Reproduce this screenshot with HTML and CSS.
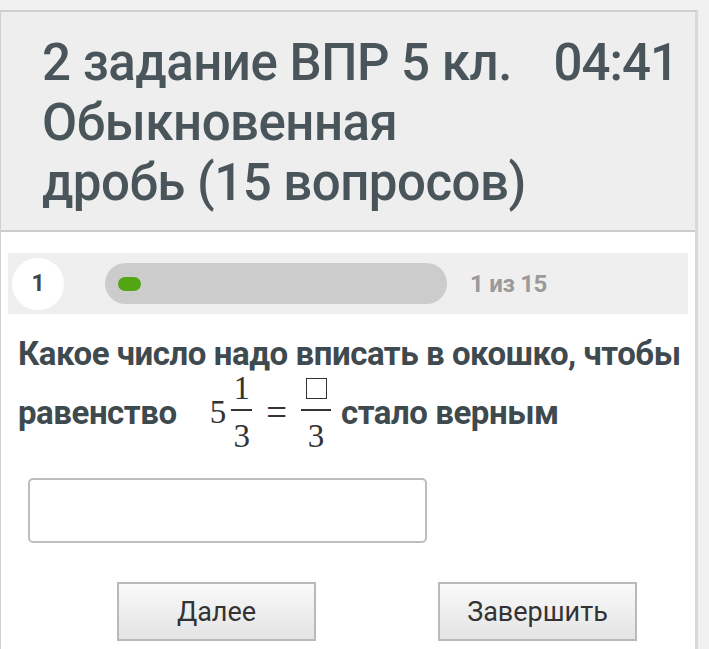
FILE: index.html
```html
<!DOCTYPE html>
<html lang="ru">
<head>
<meta charset="utf-8">
<title>ВПР 5 кл.</title>
<link rel="stylesheet" href="styles.css">
</head>
<body>
<div class="card">
  <div class="header">
    <div class="title">2 задание ВПР 5 кл. Обыкновенная дробь (15 вопросов)</div>
    <div class="timer">04:41</div>
  </div>
  <div class="progress">
    <div class="num">1</div>
    <div class="track"><div class="dot"></div></div>
    <div class="count">1 из 15</div>
  </div>
  <div class="question">
    <div class="line1">Какое число надо вписать в окошко, чтобы</div>
    <div class="line2">
      <span>равенство</span>
      <span class="math">
        <span class="whole">5</span>
        <span class="frac"><span class="nu">1</span><span class="de">3</span></span>
        <span class="eq">=</span>
        <span class="frac frac2"><span class="nu"><span class="box"></span></span><span class="de">3</span></span>
      </span>
      <span>стало верным</span>
    </div>
  </div>
  <div class="answer"><input class="field" type="text"></div>
  <div class="buttons">
    <button class="btn">Далее</button>
    <button class="btn">Завершить</button>
  </div>
</div>
</body>
</html>
```

FILE: styles.css
```css
html, body {
  margin: 0;
  padding: 0;
}
body {
  background: #f1f1f1;
  font-family: Roboto, "Noto Sans", sans-serif;
  height: 649px;
  overflow: hidden;
}
.card {
  margin-top: 10px;
  width: 694px;
  height: 637px;
  background: #fff;
  border-top: 2px solid #cfcfcf;
  border-left: 1px solid #d0d0d0;
  border-right: 3px solid #d9d9d9;
  overflow: hidden;
}
.header {
  background: #eeeeee;
  border-bottom: 2px solid #cccccc;
  display: flex;
  justify-content: space-between;
  align-items: flex-start;
  padding: 21px 17px 17px 41px;
  color: #4a555b;
  font-size: 51px;
  line-height: 60px;
  font-weight: 500;
  letter-spacing: -0.5px;
}
.title {
  width: 500px;
}
.timer {
  letter-spacing: -1px;
}
.progress {
  margin: 21px 7px 0 7px;
  height: 61px;
  background: #efefef;
  display: flex;
  align-items: center;
  padding-left: 4px;
}
.num {
  width: 52px;
  height: 52px;
  border-radius: 50%;
  background: #fff;
  display: flex;
  align-items: center;
  justify-content: center;
  font-weight: 700;
  font-size: 23px;
  color: #444;
}
.track {
  margin-left: 41px;
  width: 342px;
  height: 41px;
  border-radius: 21px;
  background: #cccccc;
  display: flex;
  align-items: center;
}
.dot {
  margin-left: 13px;
  width: 23px;
  height: 14px;
  border-radius: 7px;
  background: #52a614;
}
.count {
  margin-left: 23px;
  font-weight: 700;
  font-size: 24px;
  letter-spacing: -0.3px;
  color: #9a9a9a;
}
.question {
  padding: 20px 0 0 17px;
  color: #3f4a4f;
  font-weight: 700;
  font-size: 33px;
  letter-spacing: -0.45px;
}
.line1 {
  line-height: 40px;
}
.line2 {
  display: flex;
  align-items: center;
  margin-top: -4px;
}
.math {
  display: inline-flex;
  align-items: center;
  margin-left: 33px;
  margin-right: 10px;
  font-family: "Liberation Serif", "Times New Roman", serif;
  font-weight: 400;
  font-size: 33px;
  letter-spacing: 0;
  color: #333;
}
.whole {
  margin-right: 5px;
}
.frac {
  display: inline-flex;
  flex-direction: column;
  align-items: center;
  width: 21px;
}
.frac .nu {
  line-height: 36px;
  padding-bottom: 3px;
  border-bottom: 2px solid #333;
  width: 100%;
  text-align: center;
}
.frac .de {
  line-height: 36px;
  padding-top: 7px;
}
.frac2 {
  width: 30px;
}
.frac2 .nu {
  height: 36px;
  display: flex;
  align-items: center;
  justify-content: center;
}
.box {
  width: 19px;
  height: 19px;
  border: 1.5px solid #333;
}
.eq {
  margin: 0 14px;
  font-size: 37px;
}
.answer {
  padding: 24px 0 0 27px;
}
.field {
  display: block;
  box-sizing: border-box;
  width: 399px;
  height: 65px;
  border: 2px solid #bdbdbd;
  border-radius: 5px;
  background: #fff;
  outline: none;
}
.buttons {
  display: flex;
  gap: 122px;
  padding: 39px 0 0 116px;
}
.btn {
  box-sizing: border-box;
  width: 199px;
  height: 59px;
  border: 2px solid #b9b9b9;
  background: linear-gradient(#f9f9f9, #e4e4e4);
  font-family: Roboto, "Noto Sans", sans-serif;
  font-size: 27px;
  color: #333;
  padding: 0;
}
```
